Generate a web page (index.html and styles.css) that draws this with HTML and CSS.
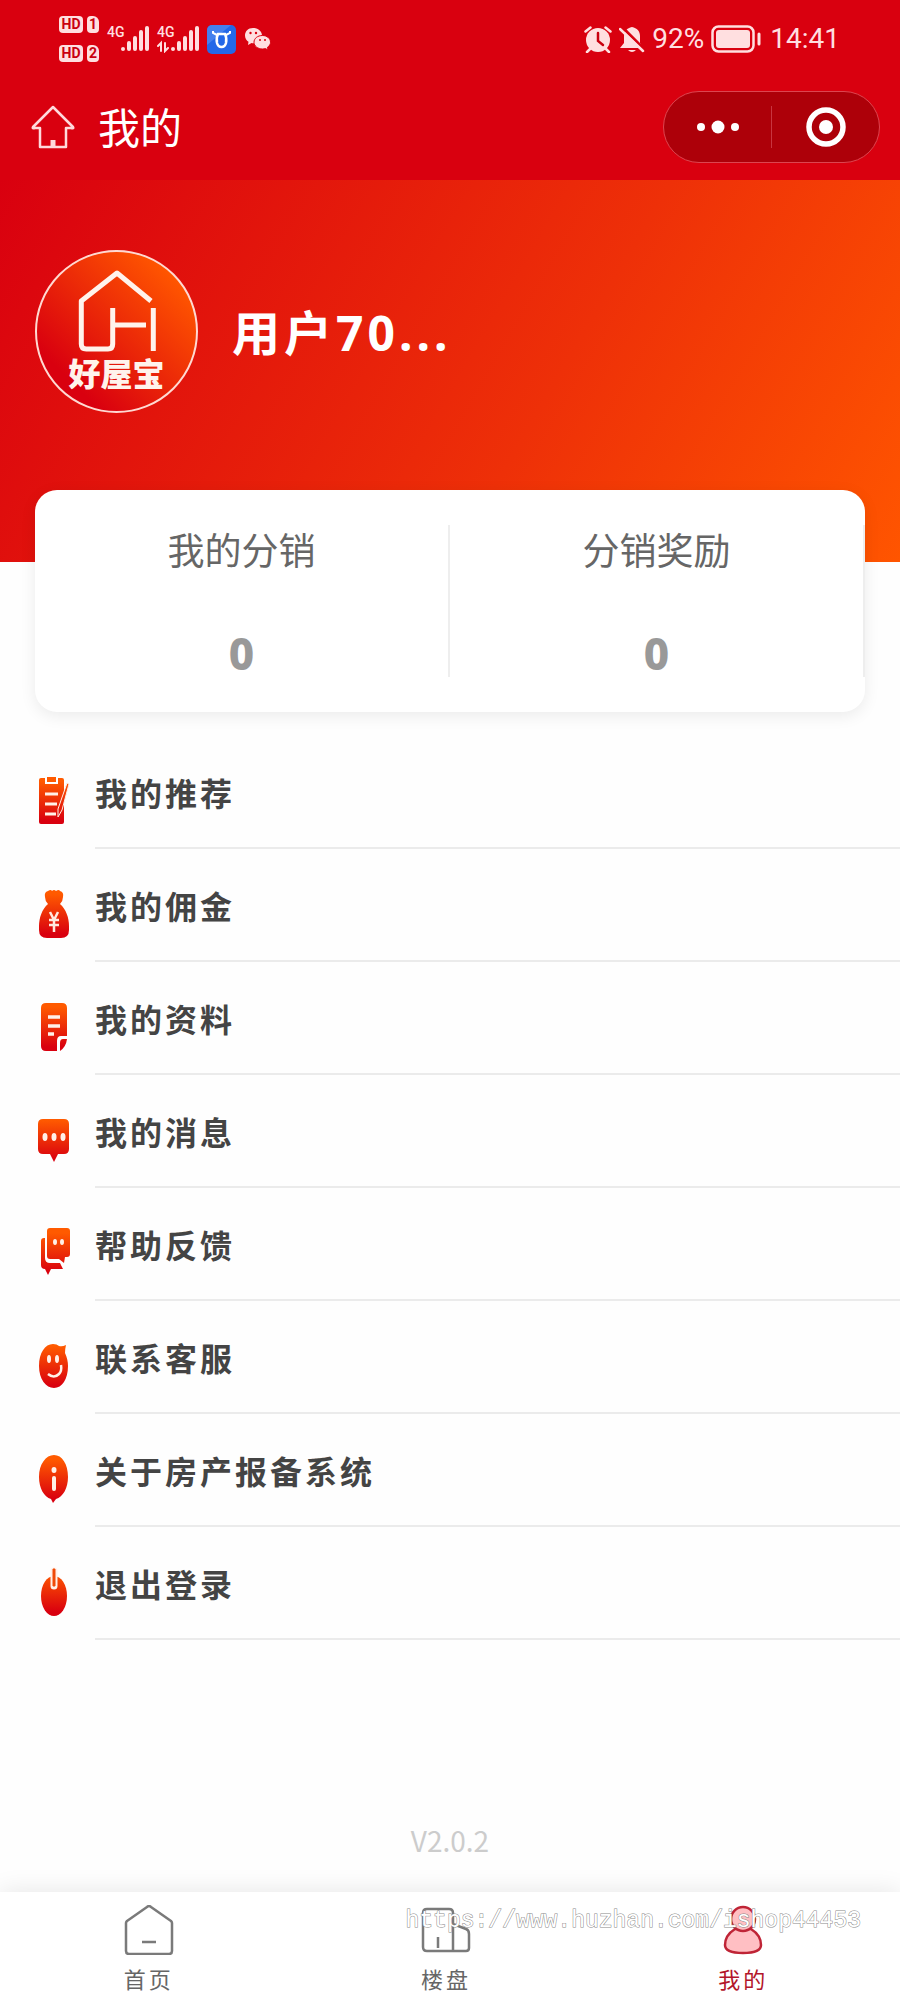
FILE: index.html
```html
<!DOCTYPE html>
<html lang="zh-CN">
<head>
    <meta charset="UTF-8">
    <meta name="viewport" content="width=device-width, initial-scale=1.0">
    <title>我的</title>
    <link rel="stylesheet" href="styles.css">
</head>
<body>
    <!-- Shared gradient for the menu icons -->
    <svg class="defs" width="0" height="0" aria-hidden="true">
        <defs>
            <linearGradient id="flame" gradientUnits="userSpaceOnUse" x1="0" y1="0" x2="0" y2="50">
                <stop offset="0.1" stop-color="#ff5a00"/>
                <stop offset="0.9" stop-color="#d9000f"/>
            </linearGradient>
        </defs>
    </svg>

    <header class="header">
        <div class="status-bar">
            <div class="status-left">
                <div class="sims">
                    <span class="hd">HD</span><span class="sim">1</span>
                    <span class="hd">HD</span><span class="sim">2</span>
                </div>
                <div class="signal">
                    <span class="net">4G</span>
                    <svg width="42" height="28" viewBox="0 0 42 28" stroke="#ffdfe0" stroke-width="4" stroke-linecap="round">
                        <path d="M16 24v0M22 24v-6M28 24v-11M34 24v-17M40 24v-21"/>
                    </svg>
                </div>
                <div class="signal">
                    <span class="net">4G</span>
                    <svg width="42" height="28" viewBox="0 0 42 28" stroke="#ffdfe0" stroke-width="4" stroke-linecap="round">
                        <path d="M16 24v0M22 24v-6M28 24v-11M34 24v-17M40 24v-21"/>
                        <path d="M1 21l3-3v8M8 18v8l3-3" fill="none" stroke-width="2"/>
                    </svg>
                </div>
                <svg width="29" height="29" viewBox="0 0 29 29">
                    <rect width="29" height="29" rx="5" fill="#2468e8"/>
                    <path d="M0 5a5 5 0 0 1 5-5h19L0 20z" fill="#5b91f0" opacity="0.6"/>
                    <path d="M6 6v2l4 2M23 6v2l-4 2" fill="none" stroke="#fff" stroke-width="2"/>
                    <path d="M11 9h7q2 4 1 9-1 4-4.500 4T10 18q-1-5 1-9z" fill="none" stroke="#fff" stroke-width="2.500"/>
                </svg>
                <svg width="27" height="24" viewBox="0 0 27 24">
                    <path d="M9 1C4 1 1 4.500 1 8.500c0 3 1.500 5 3.500 6.300L4 18l3.500-2C13 17 18 14 18 8.500 18 4.500 14 1 9 1z" fill="#ffdfe0"/>
                    <path d="M18.500 8.500c-5 0-8.500 3-8.500 6.700 0 4 4 6.800 8.500 6.800 1 0 2 0 3-.4L24 23l-.5-2.800c2-1.200 3-3 3-5 0-3.700-3.500-6.700-8-6.700z" fill="#ffdfe0" stroke="#d9000f"/>
                    <g fill="#d9000f"><circle cx="6.500" cy="6" r="1.200"/><circle cx="12" cy="6" r="1.200"/><circle cx="16" cy="13" r="1"/><circle cx="21" cy="13" r="1"/></g>
                </svg>
            </div>
            <div class="status-right">
                <svg width="28" height="27" viewBox="0 0 28 27">
                    <circle cx="14" cy="14" r="12" fill="#ffdfe0"/>
                    <path d="M1.500 5.500l5-4M26.500 5.500l-5-4M6 23l-3 3M22 23l3 3" stroke="#ffdfe0" stroke-width="2.500" stroke-linecap="round"/>
                    <path d="M14 7v8l5 4" fill="none" stroke="#c9000f" stroke-width="2.500" stroke-linecap="round"/>
                </svg>
                <svg width="26" height="27" viewBox="0 0 26 27">
                    <path d="M13 1c-5 1-8 4-8 9v7l-4 5h23l-3-5v-7c0-5-3-8-8-9z" fill="#ffdfe0"/>
                    <path d="M9 24h8q-4 4-8 0z" fill="#ffdfe0"/>
                    <path d="M2 0l24 24" stroke="#d9000f" stroke-width="3"/>
                    <path d="M1 3l23 22" stroke="#ffdfe0" stroke-width="2.500" stroke-linecap="round"/>
                </svg>
                <span class="status-text">92%</span>
                <svg class="battery" width="50" height="28" viewBox="0 0 50 28">
                    <rect x="1.500" y="1.500" width="41" height="25" rx="6" fill="none" stroke="#ffdfe0" stroke-width="2.500"/>
                    <rect x="5" y="5" width="34" height="18" rx="3" fill="#ffdfe0"/>
                    <path d="M48 9v10" stroke="#ffdfe0" stroke-width="3" stroke-linecap="round"/>
                </svg>
                <time class="status-text">14:41</time>
            </div>
        </div>

        <div class="nav-bar">
            <a class="home-link" href="#" aria-label="返回首页">
                <svg width="44" height="44" viewBox="0 0 44 44" fill="none" stroke="#ffd9dc" stroke-width="2.500">
                    <path d="M22 2L42 22q1 2-2 1h-5v19H9V23H4q-3 1-2-1z" stroke-linejoin="round"/>
                    <path d="M22 35v7" stroke-width="5"/>
                </svg>
            </a>
            <h1 class="nav-title">我的</h1>
            <div class="capsule">
                <button class="capsule-btn" type="button" aria-label="更多">
                    <svg width="44" height="14" viewBox="0 0 44 14" fill="#fff">
                        <circle cx="5" cy="7" r="4"/><circle cx="22" cy="7" r="6.500"/><circle cx="39" cy="7" r="4"/>
                    </svg>
                </button>
                <button class="capsule-btn" type="button" aria-label="关闭">
                    <svg width="40" height="40" viewBox="0 0 40 40">
                        <circle cx="20" cy="20" r="17" fill="none" stroke="#fff" stroke-width="5.500"/>
                        <circle cx="20" cy="20" r="7" fill="#fff"/>
                    </svg>
                </button>
            </div>
        </div>
    </header>

    <main class="main">
        <section class="hero">
            <div class="avatar">
                <svg width="80" height="84" viewBox="0 0 80 84" fill="none" stroke="#fff3ec" stroke-width="5" stroke-linejoin="round">
                    <path d="M74 31L40 3 4.300 31v43q0 5 5 5H31q4.700 0 4.700-5V38M36 55h33M76.300 38v43"/>
                </svg>
                <span class="avatar-text">好屋宝</span>
            </div>
            <h2 class="username">用户70...</h2>
        </section>

        <section class="stats">
            <div class="stat">
                <span class="stat-label">我的分销</span>
                <strong class="stat-value">0</strong>
            </div>
            <div class="stat">
                <span class="stat-label">分销奖励</span>
                <strong class="stat-value">0</strong>
            </div>
        </section>

        <ul class="menu">
            <li><a class="menu-item" href="#">
                <svg class="menu-icon" viewBox="0 0 34 50">
                    <path d="M5 2h4v6h13V2h4q2 0 2 2v42q0 2-2 2H5q-2 0-2-2V4q0-2 2-2z" fill="url(#flame)"/>
                    <path d="M11 1h9v5h-9z" fill="url(#flame)"/>
                    <path d="M9 18h13M9 28h12M9 38h11" stroke="#fff0e8" stroke-width="3"/>
                    <path d="M31 7l2 1-7 26-4 7v-8z" fill="url(#flame)" stroke="#fff0e8" stroke-width="1"/>
                </svg>
                <span class="menu-label">我的推荐</span>
            </a></li>
            <li><a class="menu-item" href="#">
                <svg class="menu-icon" viewBox="0 0 34 50">
                    <path d="M12 2q3-2 4 0 2-2 4 0 3-2 4 0 4 1 3 6 0 4-3 7c6 5 9 14 9 22v4q0 8-8 8H11q-8 0-8-8v-4c0-8 3-17 9-22q-3-3-3-7-1-5 3-6z" fill="url(#flame)"/>
                    <path d="M14 23l4 8 4-8M18 31v12M13 31h10M13 36h10" fill="none" stroke="#ffe9df" stroke-width="2.500"/>
                </svg>
                <span class="menu-label">我的佣金</span>
            </a></li>
            <li><a class="menu-item" href="#">
                <svg class="menu-icon" viewBox="0 0 34 50">
                    <path d="M10 1h16q5 0 5 5v28h-6q-4 0-4 5v10H10q-5 0-5-5V6q0-5 5-5z" fill="url(#flame)"/>
                    <path d="M24 49V41q0-4 3-4h4q-1 8-7 12z" fill="url(#flame)"/>
                    <path d="M12 15h12M12 24h12M12 32h6" stroke="#fff0e8" stroke-width="3.500"/>
                </svg>
                <span class="menu-label">我的资料</span>
            </a></li>
            <li><a class="menu-item" href="#">
                <svg class="menu-icon" viewBox="0 0 34 50">
                    <path d="M7 4h21q5 0 5 5v25q0 5-5 5h-6l-4 8-4-8H7q-5 0-5-5V9q0-5 5-5z" fill="url(#flame)"/>
                    <g fill="#fff0e8"><ellipse cx="9" cy="22" rx="2.500" ry="4"/><ellipse cx="18" cy="22" rx="2.500" ry="4"/><ellipse cx="27" cy="22" rx="2.500" ry="4"/></g>
                </svg>
                <span class="menu-label">我的消息</span>
            </a></li>
            <li><a class="menu-item" href="#">
                <svg class="menu-icon" viewBox="0 0 34 50">
                    <path d="M8 10q-3 0-3 3v24q0 4 4 4l3 6 3-6h12l-3-6H14q-5 0-5-5V10z" fill="url(#flame)"/>
                    <path d="M14 0h17q3 0 3 3v23q0 3-3 3h-2l-1 6-5-4h-9q-3 0-3-3V3q0-3 3-3z" fill="url(#flame)"/>
                    <g fill="#fff0e8"><ellipse cx="19" cy="14" rx="2" ry="3"/><ellipse cx="26" cy="14" rx="2" ry="3"/></g>
                </svg>
                <span class="menu-label">帮助反馈</span>
            </a></li>
            <li><a class="menu-item" href="#">
                <svg class="menu-icon" viewBox="0 0 34 50">
                    <path d="M17 3q4 0 6 2 3 1 7-1-1 4-1 8c2 4 3 9 3 13 0 13-6 22-14 22S3 38 3 25 9 3 17 3z" fill="url(#flame)"/>
                    <g fill="#fff0e8"><ellipse cx="13" cy="18" rx="2" ry="4"/><ellipse cx="21" cy="18" rx="2" ry="4"/></g>
                    <path d="M12 33q6 5 11 0 3-3 2-9" fill="none" stroke="#fff0e8" stroke-width="2.500"/>
                </svg>
                <span class="menu-label">联系客服</span>
            </a></li>
            <li><a class="menu-item" href="#">
                <svg class="menu-icon" viewBox="0 0 34 50">
                    <path d="M18 1c8 0 14 9 14 22 0 11-5 20-12 22l-3 4-2-4C8 43 3 34 3 23 3 10 10 1 18 1z" fill="url(#flame)"/>
                    <ellipse cx="18" cy="16" rx="2.500" ry="3" fill="#fff0e8"/>
                    <path d="M18 24v11" stroke="#fff0e8" stroke-width="4" stroke-linecap="round"/>
                </svg>
                <span class="menu-label">关于房产报备系统</span>
            </a></li>
            <li><a class="menu-item" href="#">
                <svg class="menu-icon" viewBox="0 0 34 50">
                    <ellipse cx="18" cy="29" rx="13" ry="20" fill="url(#flame)"/>
                    <path d="M18 4v15" stroke="#fff0e8" stroke-width="7" stroke-linecap="round"/>
                    <path d="M17 2h2v17h-2z" fill="#f04a08" stroke="#f04a08" stroke-linejoin="round"/>
                </svg>
                <span class="menu-label">退出登录</span>
            </a></li>
        </ul>

        <p class="version">V2.0.2</p>
    </main>

    <nav class="tab-bar">
        <a class="tab" href="#">
            <svg class="tab-icon" viewBox="0 0 50 50" fill="none" stroke="#7a7a7a" stroke-width="2.500" stroke-linejoin="round">
                <path d="M25 1q1 0 2 1l20 14q1 1 1 2v28q0 3-3 3H5q-3 0-3-3V18q0-1 1-2L23 2q1-1 2-1zM18 37h14"/>
            </svg>
            <span>首页</span>
        </a>
        <a class="tab" href="#">
            <svg class="tab-icon" viewBox="0 0 50 50" fill="none" stroke="#7a7a7a" stroke-width="2.500" stroke-linejoin="round">
                <path d="M32 46H6q-4 0-4-4V8q0-4 4-4h22q4 0 4 4zM32 19l13 5q3 1 3 5v14q0 3-3 3H32M17 32v11"/>
            </svg>
            <span>楼盘</span>
        </a>
        <a class="tab active" href="#" aria-current="page">
            <svg class="tab-icon" viewBox="0 0 50 50" fill="#ffbfc3" stroke="#bf2436" stroke-width="2.500">
                <path d="M17 24C9 29 7 35 7 40q0 8 18 8t18-8c0-5-2-11-10-16z"/>
                <circle cx="25" cy="14" r="12"/>
            </svg>
            <span>我的</span>
        </a>
        <span class="watermark">https://www.huzhan.com/ishop44453</span>
    </nav>
</body>
</html>
```
FILE: styles.css
```css
* { box-sizing: border-box; }

body {
    margin: 0;
    min-height: 100vh;
    display: flex;
    flex-direction: column;
    font-family: "Noto Sans CJK SC", "Noto Sans", sans-serif;
    background: #fefefe;
    color: #444;
}

a {
    color: inherit;
    text-decoration: none;
}

svg {
    display: block;
    flex-shrink: 0;
}

.defs {
    position: absolute;
}

/* Header */
.header {
    background: #d9000f;
    color: #fff;
    padding-bottom: 4px;
}

.status-bar {
    height: 78px;
    padding: 0 60px 0 59px;
    display: flex;
    align-items: center;
    justify-content: space-between;
    color: #ffdfe0;
}

.status-left,
.status-right {
    display: flex;
    align-items: center;
}

.status-left { gap: 8px; }
.status-right { gap: 7px; }

.sims {
    display: grid;
    grid-template-columns: 24px 12px;
    gap: 12px 4px;
    font-family: Roboto, sans-serif;
    font-weight: 700;
    font-size: 14px;
    line-height: 17px;
    text-align: center;
    color: #c9000f;
}

.hd,
.sim {
    background: #ffdfe0;
    border-radius: 4px;
}

.sim {
    border-top-right-radius: 6px;
}

.signal {
    position: relative;
}

.net {
    position: absolute;
    top: 0;
    left: 0;
    font-family: Roboto, sans-serif;
    font-weight: 500;
    font-size: 14px;
    line-height: 14px;
}

.status-text {
    font-family: Roboto, sans-serif;
    font-size: 28px;
    line-height: 32px;
}

.battery {
    margin-right: 2px;
}

.nav-bar {
    height: 98px;
    padding: 0 20px 0 31px;
    display: flex;
    align-items: center;
}

.nav-title {
    margin: 0 auto 0 23px;
    padding-bottom: 2px;
    font-size: 42px;
    font-weight: 400;
    line-height: 60px;
}

.capsule {
    display: flex;
    align-items: center;
    width: 217px;
    height: 72px;
    border: 1px solid #dc4550;
    border-radius: 36px;
    background: #ad0009;
}

.capsule-btn {
    flex: 1;
    height: 42px;
    padding: 0;
    border: 0;
    background: none;
    display: flex;
    align-items: center;
    justify-content: center;
}

.capsule-btn + .capsule-btn {
    border-left: 1px solid #c83540;
}

/* Profile */
.main {
    flex: 1;
    display: flex;
    flex-direction: column;
}

.hero {
    height: 382px;
    padding: 70px 35px;
    display: flex;
    align-items: flex-start;
    gap: 34px;
    background: linear-gradient(120deg, #d9000f 0%, #ee3008 60%, #ff5500 100%);
}

.avatar {
    width: 163px;
    height: 163px;
    padding-top: 18px;
    display: flex;
    flex-direction: column;
    align-items: center;
    border: 2px solid #ffd9d2;
    border-radius: 50%;
    background: linear-gradient(45deg, #d9000f 20%, #ff5500 85%);
}

.avatar-text {
    font-size: 32px;
    font-weight: 900;
    line-height: 36px;
    color: #fff3ec;
}

.username {
    margin: 0;
    font-family: "Noto Sans", "Noto Sans CJK SC", sans-serif;
    font-size: 48px;
    font-weight: 700;
    letter-spacing: 4px;
    line-height: 166px;
    color: #fff;
}

.stats {
    display: flex;
    margin: -72px 35px 0;
    padding: 35px 0;
    border-radius: 22px;
    background: #fff;
    box-shadow: 0 4px 16px rgba(0, 0, 0, 0.08);
}

.stat {
    flex: 1;
    display: flex;
    flex-direction: column;
    align-items: center;
    gap: 56px;
    border-right: 2px solid #eee;
}

.stat-label {
    font-size: 37px;
    line-height: 48px;
    color: #666;
}

.stat-value {
    font-family: "Noto Sans", sans-serif;
    font-size: 44px;
    font-weight: 800;
    line-height: 48px;
    color: #999;
}

/* Menu */
.menu {
    list-style: none;
    margin: 24px 0 0;
    padding: 0;
}

.menu-item {
    display: flex;
    gap: 25px;
    padding-left: 36px;
}

.menu-icon {
    width: 34px;
    height: 50px;
    margin-top: 40px;
}

.menu-label {
    flex: 1;
    height: 113px;
    padding-top: 32px;
    border-bottom: 2px solid #ebebeb;
    font-size: 32px;
    font-weight: 700;
    letter-spacing: 3px;
    line-height: 48px;
}

.version {
    margin: auto 0 0;
    padding-bottom: 32px;
    font-size: 28px;
    line-height: 40px;
    text-align: center;
    color: #ccc;
}

/* Bottom tabs */
.tab-bar {
    position: relative;
    display: flex;
    height: 108px;
    padding: 13px 8px 0 0;
    background: #fff;
    box-shadow: 0 0 24px rgba(0, 0, 0, 0.1);
}

.tab {
    flex: 1;
    display: flex;
    flex-direction: column;
    align-items: center;
    gap: 7px;
    font-size: 22px;
    letter-spacing: 3px;
    line-height: 32px;
    color: #666;
}

.tab.active {
    color: #b3152a;
}

.tab-icon {
    width: 50px;
    height: 50px;
}

.watermark {
    position: absolute;
    top: 14px;
    right: 39px;
    font-family: "Liberation Mono", monospace;
    font-size: 23px;
    line-height: 30px;
    color: #fff;
    -webkit-text-stroke: 1px #888;
    paint-order: stroke fill;
    pointer-events: none;
}
```
